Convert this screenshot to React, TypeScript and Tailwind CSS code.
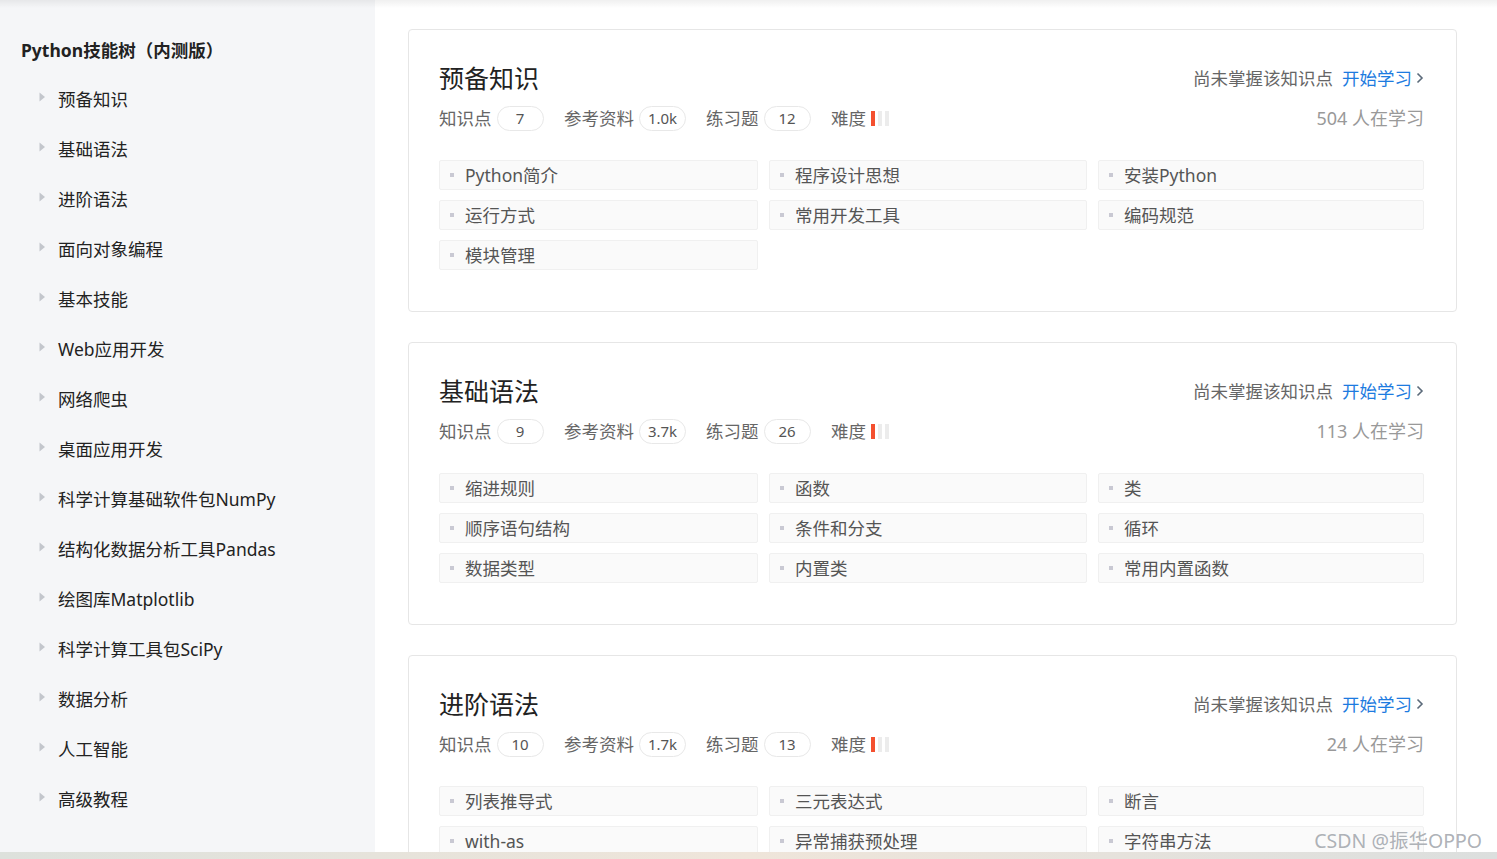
import React from "react";

type Section = {
  title: string;
  kp: string;
  ref: string;
  ex: string;
  learners: string;
  items: string[];
};

const sections: Section[] = [
  {
    title: "预备知识",
    kp: "7",
    ref: "1.0k",
    ex: "12",
    learners: "504",
    items: ["Python简介", "程序设计思想", "安装Python", "运行方式", "常用开发工具", "编码规范", "模块管理"],
  },
  {
    title: "基础语法",
    kp: "9",
    ref: "3.7k",
    ex: "26",
    learners: "113",
    items: ["缩进规则", "函数", "类", "顺序语句结构", "条件和分支", "循环", "数据类型", "内置类", "常用内置函数"],
  },
  {
    title: "进阶语法",
    kp: "10",
    ref: "1.7k",
    ex: "13",
    learners: "24",
    items: ["列表推导式", "三元表达式", "断言", "with-as", "异常捕获预处理", "字符串方法"],
  },
];

const navItems = [
  "预备知识",
  "基础语法",
  "进阶语法",
  "面向对象编程",
  "基本技能",
  "Web应用开发",
  "网络爬虫",
  "桌面应用开发",
  "科学计算基础软件包NumPy",
  "结构化数据分析工具Pandas",
  "绘图库Matplotlib",
  "科学计算工具包SciPy",
  "数据分析",
  "人工智能",
  "高级教程",
];

const font = { fontFamily: '"Noto Sans", "Noto Sans CJK SC", sans-serif' };

function Pill({ value }: { value: string }) {
  return (
    <span className="ml-[5px] inline-flex h-[25px] w-[47px] items-center justify-center rounded-full border border-[#e8e8e8] text-[15px] leading-none text-[#555]">
      {value}
    </span>
  );
}

function Card({ s }: { s: Section }) {
  return (
    <div className="shrink-0 rounded-[4px] border border-[#e6e6e6] bg-white pl-[30px] pr-[32px] pt-[32px] pb-[41px]">
      <div className="flex h-[32px] items-center justify-between">
        <div className="text-[25px] leading-[32px] text-[#222]">{s.title}</div>
        <div className="flex items-center text-[17.5px] leading-[24px]">
          <span className="text-[#666]">尚未掌握该知识点</span>
          <span className="ml-[9px] text-[#1d7be0]">开始学习</span>
          <svg width="8" height="12" viewBox="0 0 8 12" className="ml-[4px]">
            <path d="M1.5 1.5 L6 6 L1.5 10.5" fill="none" stroke="#5b6a7a" strokeWidth="1.6" />
          </svg>
        </div>
      </div>
      <div className="mt-[11px] flex h-[26px] items-center justify-between">
        <div className="flex items-center text-[17.5px] leading-[26px] text-[#666]">
          <span>知识点</span>
          <Pill value={s.kp} />
          <span className="ml-[20.5px]">参考资料</span>
          <Pill value={s.ref} />
          <span className="ml-[20px]">练习题</span>
          <Pill value={s.ex} />
          <span className="ml-[20.5px]">难度</span>
          <span className="ml-[5px] flex items-center gap-[3px]">
            <span className="h-[15px] w-[4px] bg-[#f4502f]" />
            <span className="h-[15px] w-[4px] bg-[#ececec]" />
            <span className="h-[15px] w-[4px] bg-[#ececec]" />
          </span>
        </div>
        <div className="text-[18px] leading-[26px] text-[#999]">{s.learners} 人在学习</div>
      </div>
      <div className="mt-[29px] grid grid-cols-[319px_318px_1fr] gap-x-[11px] gap-y-[10px]">
        {s.items.map((it) => (
          <div
            key={it}
            className="flex h-[30px] items-center rounded-[2px] border border-[#f0f0f0] bg-[#fafafa] pl-[10px]"
          >
            <span className="h-[4px] w-[4px] bg-[#c9c9d3]" />
            <span className="ml-[11px] text-[17.5px] leading-[28px] text-[#555]">{it}</span>
          </div>
        ))}
      </div>
    </div>
  );
}

export default function App() {
  return (
    <div className="relative flex h-[859px] w-full flex-col overflow-hidden bg-white" style={font}>
      <div className="flex min-h-0 flex-1">
        <aside className="w-[375px] shrink-0 bg-[#f5f6f8] pt-[38px]">
          <div className="pl-[21px] text-[17.5px] font-bold leading-[24px] text-[#222]">Python技能树（内测版）</div>
          <ul className="mt-[12px]">
            {navItems.map((n) => (
              <li key={n} className="flex h-[50px] items-center pl-[39px]">
                <svg width="7" height="10" viewBox="0 0 7 10" className="-mt-[4px]">
                  <path d="M0.5 0.5 L6 5 L0.5 9.5 Z" fill="#c3c6cc" />
                </svg>
                <span className="ml-[12px] text-[17.5px] leading-[24px] text-[#222]">{n}</span>
              </li>
            ))}
          </ul>
        </aside>
        <main className="flex min-w-0 flex-1 flex-col gap-[30px] overflow-hidden pl-[33px] pr-[40px] pt-[29px]">
          {sections.map((s) => (
            <Card key={s.title} s={s} />
          ))}
        </main>
      </div>
      <div className="h-[7px] shrink-0 bg-gradient-to-r from-[#dde1dc] via-[#efe5da] to-[#dcdfde]" />
      <div className="pointer-events-none absolute left-0 right-0 top-0 h-[8px] bg-gradient-to-b from-black/[0.06] to-transparent" />
      <div className="pointer-events-none absolute bottom-[6px] right-[15px] text-[19.5px] leading-[24px] text-[#a4a8ae]/90">
        CSDN @振华OPPO
      </div>
    </div>
  );
}
